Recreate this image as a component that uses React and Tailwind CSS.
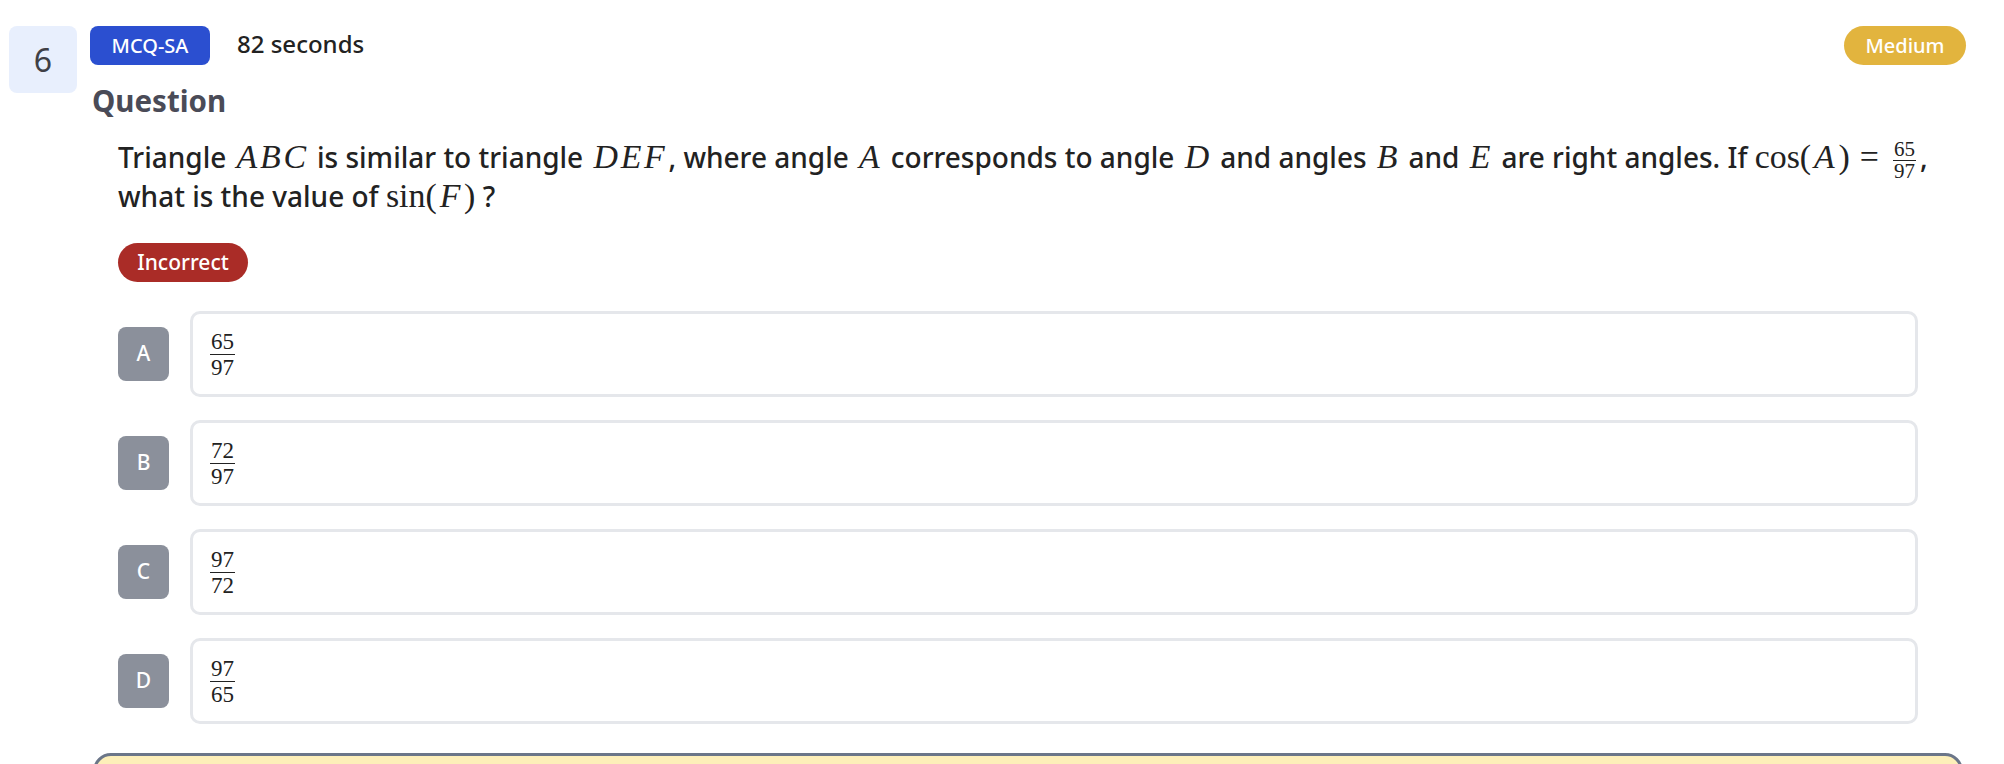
import React from 'react';

// math helpers (no KaTeX available, so serif spans stand in for it)
const M = ({ children }) => (
  <span className="font-['Liberation_Serif',serif] font-normal italic text-[1.21em] leading-none tracking-[0.08em] ml-[3px] pr-[1px]">
    {children}
  </span>
);

const Up = ({ children }) => (
  <span className="font-['Liberation_Serif',serif] font-normal text-[1.21em] leading-none">{children}</span>
);

const InlineFrac = ({ top, bottom }) => (
  <span className="inline-flex flex-col items-center align-middle -my-3 mx-[4px] font-['Liberation_Serif',serif] font-normal text-[21px] leading-none">
    <span className="px-[1px]">{top}</span>
    <span className="w-full h-[1px] bg-[#222]" />
    <span className="px-[1px]">{bottom}</span>
  </span>
);

const DisplayFrac = ({ top, bottom }) => (
  <span className="inline-flex flex-col items-center font-['Liberation_Serif',serif] text-[23px] leading-none text-[#222]">
    <span className="px-[1px]">{top}</span>
    <span className="w-full h-[1px] bg-[#222] my-[1px]" />
    <span className="px-[1px]">{bottom}</span>
  </span>
);

const options = [
  { letter: 'A', top: '65', bottom: '97' },
  { letter: 'B', top: '72', bottom: '97' },
  { letter: 'C', top: '97', bottom: '72' },
  { letter: 'D', top: '97', bottom: '65' },
];

const App = () => {
  return (
    <div className="w-full h-[764px] overflow-hidden bg-white font-['Noto_Sans',sans-serif] text-[#222]">
      <div className="flex">
        {/* Nomor soal */}
        <div className="ml-[9px] mt-[26px] w-[68px] h-[67px] shrink-0 rounded-lg bg-[#e8effd] flex items-center justify-center text-[32px] text-[#3f3f46]">
          6
        </div>

        <div className="ml-[13px] mr-[38px] flex-1 flex flex-col">
          {/* Header */}
          <div className="mt-[26px] h-[39px] flex items-center justify-between">
            <div className="flex items-center gap-[27px]">
              <span className="w-[120px] h-[39px] rounded-lg bg-[#2b4fd0] text-white text-[20px] font-medium flex items-center justify-center">
                MCQ-SA
              </span>
              <span className="text-[24px] font-medium mb-[4px]">82 seconds</span>
            </div>
            <span className="w-[122px] h-[39px] rounded-full bg-[#e2b43e] text-white text-[20px] font-medium flex items-center justify-center">
              Medium
            </span>
          </div>

          <h2 className="mt-[16px] ml-[2px] text-[29.5px] leading-[40px] font-bold text-[#4a4b57]">Question</h2>

          <div className="pl-[28px]">
            {/* Teks soal */}
            <div className="mt-[17px] text-[28px] leading-[39px] font-medium text-[#222]">
              <div className="whitespace-nowrap">
                Triangle <M>ABC</M> is similar to triangle <M>DEF</M>, where angle <M>A</M> corresponds to angle{' '}
                <M>D</M> and angles <M>B</M> and <M>E</M> are right angles. If <Up>cos(</Up>
                <M>A</M>
                <Up>)</Up>
                <Up>
                  <span className="mx-[10px]">=</span>
                </Up>
                <InlineFrac top="65" bottom="97" />,
              </div>
              <div className="whitespace-nowrap">
                what is the value of <Up>sin(</Up>
                <M>F</M>
                <Up>)</Up> ?
              </div>
            </div>

            <div className="mt-[27px]">
              <span className="inline-flex w-[130px] h-[39px] rounded-full bg-[#aa2c27] text-white text-[21px] font-medium items-center justify-center">
                Incorrect
              </span>
            </div>

            {/* Pilihan jawaban */}
            <div className="mt-[29px] flex flex-col gap-[23px] mr-[48px]">
              {options.map((opt) => (
                <div key={opt.letter} className="flex items-center gap-[21px]">
                  <div className="w-[51px] h-[54px] shrink-0 rounded-lg bg-[#8b909b] text-white text-[21px] font-medium flex items-center justify-center">
                    {opt.letter}
                  </div>
                  <div className="flex-1 h-[86px] rounded-[10px] border-[3px] border-[#e5e7eb] flex items-center pl-[17px]">
                    <DisplayFrac top={opt.top} bottom={opt.bottom} />
                  </div>
                </div>
              ))}
            </div>
          </div>

          {/* Kotak penjelasan */}
          <div className="mt-[29px] mx-[3px] h-[120px] rounded-[18px] border-[3px] border-[#6b7689] bg-[#fdefb9]" />
        </div>
      </div>
    </div>
  );
};

export default App;
